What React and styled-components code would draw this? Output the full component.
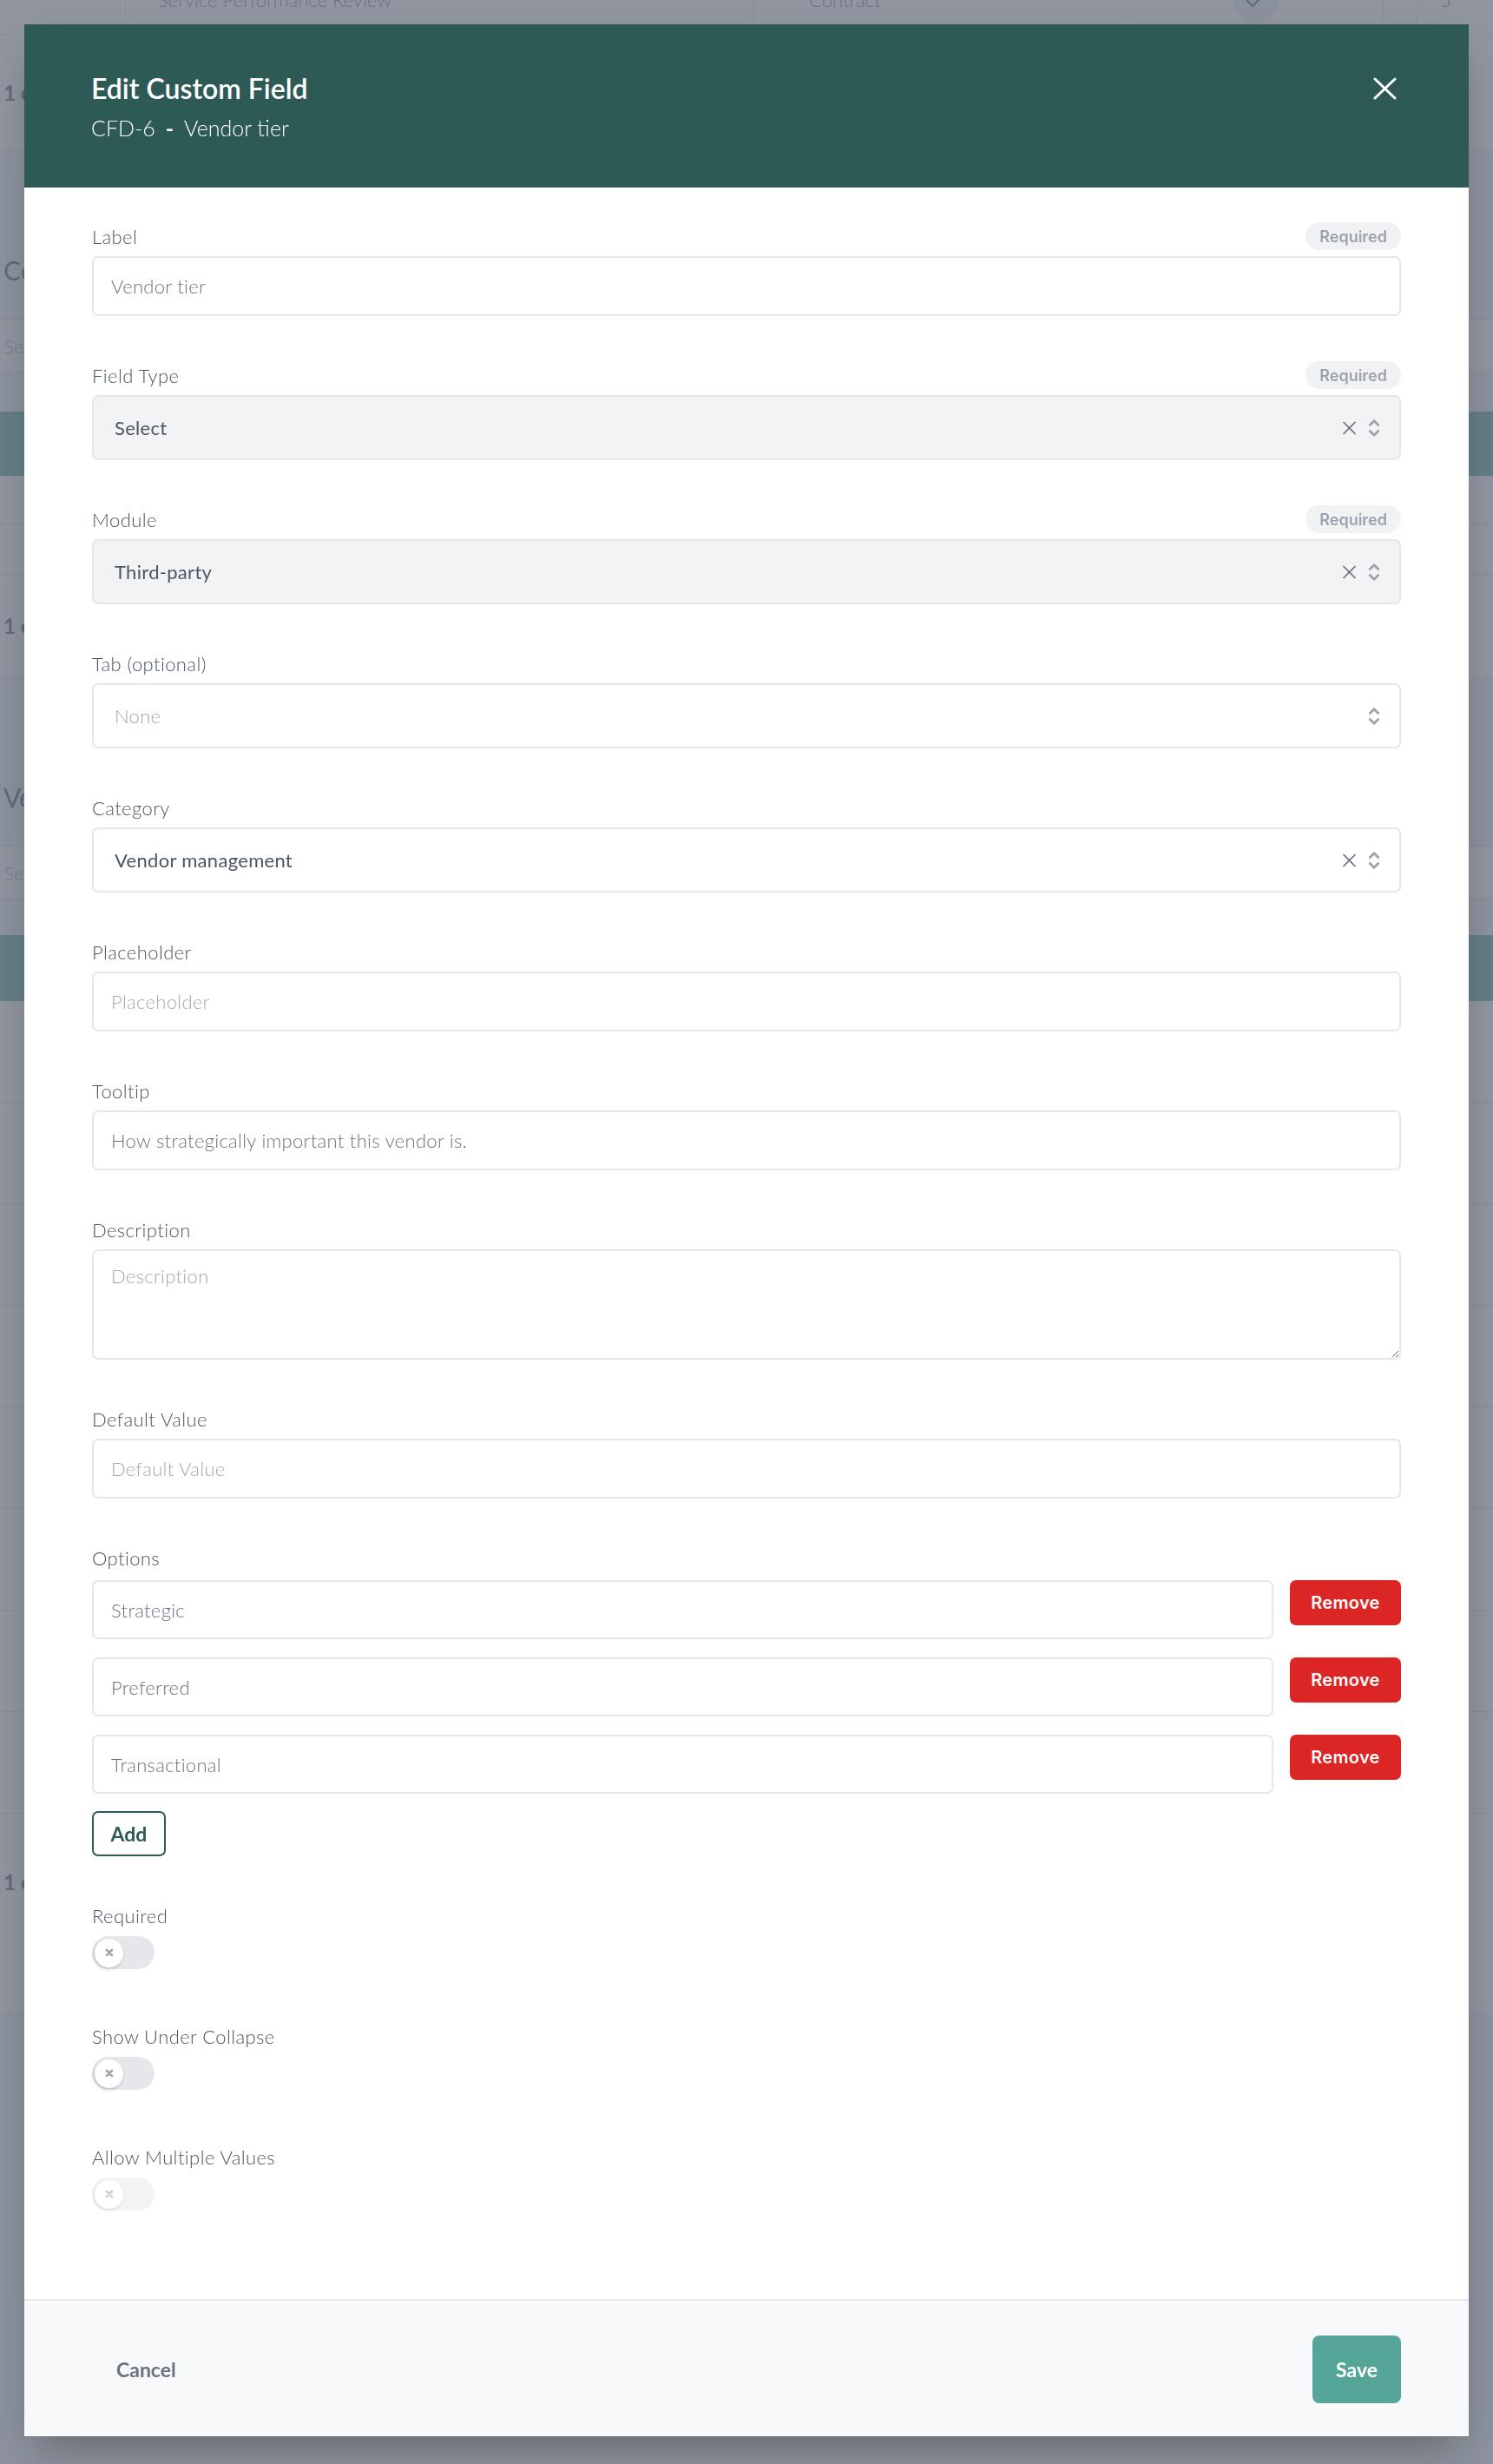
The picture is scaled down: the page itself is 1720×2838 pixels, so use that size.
import React from 'react';
import styled, { createGlobalStyle } from 'styled-components';

const GlobalStyle = createGlobalStyle`
  * { box-sizing: border-box; }
  html, body { margin: 0; padding: 0; }
  body {
    font-family: Lato, "Open Sans", "Liberation Sans", sans-serif;
    background: #f3f4f6;
    -webkit-font-smoothing: antialiased;
  }
  input, textarea, button { font-family: inherit; }
`;

/* ---------- page sitting behind the dialog ---------- */

const Backdrop = styled.div`
  height: 2838px;
  overflow: hidden;
  background: #f3f4f6;
  color: #374151;
`;

const TopRow = styled.div`
  margin-top: -40px;
  height: 80px;
  display: grid;
  grid-template-columns: 144px 723px 432px 294px 39px 1fr;
  background: #fff;
  border-bottom: 1px solid #e5e7eb;
  font-size: 22px;
  font-weight: 300;
  color: #6b7280;
`;

const TopCell = styled.div`
  display: flex;
  align-items: center;
  justify-content: ${p => (p.$center ? 'center' : 'flex-start')};
  padding-left: ${p => p.$pad || 0}px;
  border-left: ${p => (p.$divider ? '1px solid #e5e7eb' : 'none')};
`;

const CheckBubble = styled.span`
  width: 52px;
  height: 52px;
  border-radius: 50%;
  background: #e7efee;
  display: flex;
  align-items: center;
  justify-content: center;
`;

const Pager = styled.div`
  height: ${p => p.$height}px;
  background: ${p => (p.$card ? '#fff' : 'transparent')};
  display: flex;
  align-items: ${p => (p.$top ? 'flex-start' : 'center')};
  padding: ${p => (p.$top ? '64px' : '0')} 0 0 4px;
  font-size: 24px;
  font-weight: 700;
  color: #4b5563;
`;

const SectionTitle = styled.h2`
  margin: 0;
  height: ${p => p.$height}px;
  display: flex;
  align-items: flex-end;
  padding: 0 0 22px 4px;
  font-size: 30px;
  line-height: 34px;
  font-weight: 400;
  color: #4b5563;
`;

const SearchBar = styled.div`
  margin: 17px 0 ${p => p.$after}px;
  height: 62px;
  background: #fff;
  border-top: 1px solid #d1d5db;
  border-bottom: 1px solid #d1d5db;
  display: flex;
  align-items: center;
  padding-left: 4px;
  font-size: 22px;
  font-weight: 300;
  color: #9ca3af;
`;

const HeadBand = styled.div`
  height: ${p => p.$height}px;
  background: #55a698;
`;

const TableRow = styled.div`
  height: ${p => p.$height}px;
  background: #fff;
  border-bottom: 1px solid #d9dce1;
`;

/* ---------- dialog ---------- */

const Overlay = styled.div`
  position: fixed;
  inset: 0;
  background: rgba(107, 114, 128, 0.75);
  display: flex;
  justify-content: center;
  align-items: flex-start;
  padding: 28px 28px 30px;
`;

const Dialog = styled.div`
  width: 100%;
  background: #fff;
  display: flex;
  flex-direction: column;
  box-shadow: 0 25px 50px -12px rgba(0, 0, 0, 0.3);
`;

const Header = styled.header`
  height: 188px;
  background: #2e5a55;
  color: #fff;
  display: flex;
  flex-direction: column;
  justify-content: center;
  padding: 0 83px 0 77px;
`;

const TitleRow = styled.div`
  display: flex;
  align-items: center;
  justify-content: space-between;
  margin-bottom: 11px;
`;

const Title = styled.h1`
  margin: 0;
  font-size: 32px;
  line-height: 38px;
  font-weight: 600;
`;

const Subtitle = styled.p`
  margin: 0;
  font-size: 25px;
  line-height: 30px;
  font-weight: 300;
`;

const Dash = styled.span`
  margin: 0 12px;
  font-weight: 700;
`;

const CloseButton = styled.button`
  border: 0;
  padding: 0;
  background: none;
  display: flex;
  cursor: pointer;
`;

const Body = styled.div`
  padding: 40px 78px 93px;
  display: flex;
  flex-direction: column;
  gap: 52px;
`;

const Field = styled.div`
  display: flex;
  flex-direction: column;
  gap: ${p => p.$gap || 7}px;
`;

const LabelRow = styled.div`
  height: 32px;
  display: flex;
  align-items: center;
  justify-content: space-between;
`;

const Label = styled.label`
  font-size: 22px;
  font-weight: 300;
  letter-spacing: 0.4px;
  color: #4b5563;
`;

const Badge = styled.span`
  height: 32px;
  padding: 0 16px;
  border-radius: 16px;
  background: #f1f2f4;
  color: #9ca3af;
  font-family: Inter, "Open Sans", sans-serif;
  font-size: 18px;
  font-weight: 600;
  display: flex;
  align-items: center;
`;

const TextInput = styled.input`
  width: 100%;
  height: ${p => p.$height || 69}px;
  border: 2px solid #e5e7eb;
  border-radius: 7px;
  padding: 0 20px;
  font-size: 22px;
  font-weight: 300;
  letter-spacing: 0.3px;
  color: #6b7280;
  background: #fff;
  outline: none;
  &::placeholder { color: #a3a8b2; }
`;

const TextArea = styled.textarea`
  width: 100%;
  height: 127px;
  border: 2px solid #e5e7eb;
  border-radius: 7px;
  padding: 16px 20px;
  font-size: 22px;
  line-height: 26px;
  font-weight: 300;
  letter-spacing: 0.3px;
  color: #6b7280;
  outline: none;
  &::placeholder { color: #a3a8b2; }
`;

const SelectBox = styled.div`
  height: 75px;
  border: 2px solid #e5e7eb;
  border-radius: 7px;
  background: ${p => (p.$disabled ? '#f2f3f5' : '#fff')};
  display: flex;
  align-items: center;
  justify-content: space-between;
  padding: 0 22px 0 24px;
  font-size: 22px;
  font-weight: ${p => (p.$muted ? 300 : 400)};
  letter-spacing: 0.3px;
  color: ${p => (p.$muted ? '#9ca3af' : '#4b5563')};
`;

const SelectIcons = styled.span`
  display: flex;
  align-items: center;
  gap: 13px;
`;

const OptionList = styled.div`
  display: flex;
  flex-direction: column;
  gap: 21px;
`;

const OptionRow = styled.div`
  display: flex;
  align-items: flex-start;
  gap: 19px;
`;

const RemoveButton = styled.button`
  flex: none;
  width: 128px;
  height: 52px;
  border: 0;
  border-radius: 7px;
  background: #dc2626;
  color: #fff;
  font-family: Inter, "Open Sans", sans-serif;
  font-size: 20px;
  font-weight: 600;
  letter-spacing: 0.3px;
  cursor: pointer;
`;

const AddButton = styled.button`
  align-self: flex-start;
  margin-top: -1px;
  width: 85px;
  height: 52px;
  border: 2px solid #2e5a55;
  border-radius: 7px;
  background: #fff;
  color: #2e5a55;
  font-size: 23px;
  font-weight: 700;
  cursor: pointer;
`;

const SwitchSlot = styled.div`
  height: 48px;
  padding-top: 1px;
`;

const Switch = styled.span`
  width: 72px;
  height: 38px;
  border-radius: 19px;
  background: #e5e7eb;
  padding: 0 3px;
  display: flex;
  align-items: center;
  opacity: ${p => (p.$disabled ? 0.5 : 1)};
`;

const Knob = styled.span`
  width: 33px;
  height: 33px;
  border-radius: 50%;
  background: #fff;
  box-shadow: -1px 2px 4px rgba(0, 0, 0, 0.18);
  display: flex;
  align-items: center;
  justify-content: center;
`;

const Footer = styled.footer`
  border-top: 2px solid #e5e7eb;
  background: #f8f9fb;
  padding: 40px 78px 38px;
  display: flex;
  align-items: center;
  justify-content: space-between;
`;

const FooterButton = styled.button`
  height: 78px;
  padding: 0 ${p => (p.$primary ? 27 : 28)}px;
  border: 0;
  border-radius: 8px;
  background: ${p => (p.$primary ? '#55a698' : 'transparent')};
  color: ${p => (p.$primary ? '#fff' : '#6b7280')};
  font-size: 23px;
  font-weight: 700;
  cursor: pointer;
`;

/* ---------- icons ---------- */

const CloseIcon = () => (
  <svg width="27" height="26" viewBox="0 0 27 26">
    <path d="M2 2L25 24M25 2L2 24" stroke="#fff" strokeWidth="3" strokeLinecap="round" />
  </svg>
);

const ClearIcon = () => (
  <svg width="17" height="16" viewBox="0 0 17 16">
    <path d="M1.5 1L15.5 15M15.5 1L1.5 15" stroke="#6b7280" strokeWidth="1.7" />
  </svg>
);

const ChevronsIcon = () => (
  <svg width="14" height="24" viewBox="0 0 14 24">
    <path d="M2.2 8.6L7 3.8L11.8 8.6M2.2 15.4L7 20.2L11.8 15.4" fill="none" stroke="#9ca3af" strokeWidth="2.8" strokeLinecap="round" strokeLinejoin="round" />
  </svg>
);

const KnobIcon = () => (
  <svg width="10" height="10" viewBox="0 0 10 10">
    <path d="M2 2L8 8M8 2L2 8" stroke="#9ca3af" strokeWidth="2.6" strokeLinecap="round" />
  </svg>
);

const CheckIcon = () => (
  <svg width="26" height="20" viewBox="0 0 26 20">
    <path d="M2 10L9 17L24 2" fill="none" stroke="#2e5a55" strokeWidth="2" />
  </svg>
);

/* ---------- pieces ---------- */

const Select = ({ value, disabled, muted, clearable = true }) => (
  <SelectBox $disabled={disabled} $muted={muted}>
    <span>{value}</span>
    <SelectIcons>
      {clearable && <ClearIcon />}
      <ChevronsIcon />
    </SelectIcons>
  </SelectBox>
);

const FieldLabel = ({ children, required }) => (
  <LabelRow>
    <Label>{children}</Label>
    {required && <Badge>Required</Badge>}
  </LabelRow>
);

const Toggle = ({ label, disabled }) => (
  <Field>
    <FieldLabel>{label}</FieldLabel>
    <SwitchSlot>
      <Switch $disabled={disabled}>
        <Knob><KnobIcon /></Knob>
      </Switch>
    </SwitchSlot>
  </Field>
);

const options = ['Strategic', 'Preferred', 'Transactional'];

const PageBehind = () => (
  <Backdrop>
    <TopRow>
      <TopCell />
      <TopCell $divider $pad={37}>Service Performance Review</TopCell>
      <TopCell $divider $pad={64}>Contract</TopCell>
      <TopCell $divider $center><CheckBubble><CheckIcon /></CheckBubble></TopCell>
      <TopCell $divider />
      <TopCell $divider $pad={26}>5</TopCell>
    </TopRow>
    <Pager $height={132} $card>1 of 1</Pager>

    <SectionTitle $height={178}>Contract fields</SectionTitle>
    <SearchBar $after={45}>Search</SearchBar>
    <HeadBand $height={74} />
    <TableRow $height={57} />
    <TableRow $height={57} />
    <Pager $height={116} $card>1 of 1</Pager>

    <SectionTitle $height={179}>Vendor fields</SectionTitle>
    <SearchBar $after={41}>Search</SearchBar>
    <HeadBand $height={76} />
    {Array.from({ length: 8 }).map((_, i) => (
      <TableRow key={i} $height={117} />
    ))}
    <Pager $height={227} $card $top>1 of 9</Pager>
  </Backdrop>
);

const App = () => (
  <>
    <GlobalStyle />
    <PageBehind />
    <Overlay>
      <Dialog>
        <Header>
          <TitleRow>
            <Title>Edit Custom Field</Title>
            <CloseButton aria-label="Close"><CloseIcon /></CloseButton>
          </TitleRow>
          <Subtitle>CFD-6<Dash>-</Dash>Vendor tier</Subtitle>
        </Header>

        <Body>
          <Field>
            <FieldLabel required>Label</FieldLabel>
            <TextInput readOnly value="Vendor tier" />
          </Field>

          <Field>
            <FieldLabel required>Field Type</FieldLabel>
            <Select value="Select" disabled />
          </Field>

          <Field>
            <FieldLabel required>Module</FieldLabel>
            <Select value="Third-party" disabled />
          </Field>

          <Field>
            <FieldLabel>Tab (optional)</FieldLabel>
            <Select value="None" muted clearable={false} />
          </Field>

          <Field>
            <FieldLabel>Category</FieldLabel>
            <Select value="Vendor management" />
          </Field>

          <Field>
            <FieldLabel>Placeholder</FieldLabel>
            <TextInput placeholder="Placeholder" />
          </Field>

          <Field>
            <FieldLabel>Tooltip</FieldLabel>
            <TextInput readOnly value="How strategically important this vendor is." />
          </Field>

          <Field>
            <FieldLabel>Description</FieldLabel>
            <TextArea placeholder="Description" />
          </Field>

          <Field>
            <FieldLabel>Default Value</FieldLabel>
            <TextInput placeholder="Default Value" />
          </Field>

          <Field $gap={10}>
            <FieldLabel>Options</FieldLabel>
            <OptionList>
              {options.map(option => (
                <OptionRow key={option}>
                  <TextInput readOnly value={option} $height={68} />
                  <RemoveButton>Remove</RemoveButton>
                </OptionRow>
              ))}
              <AddButton>Add</AddButton>
            </OptionList>
          </Field>

          <Toggle label="Required" />
          <Toggle label="Show Under Collapse" />
          <Toggle label="Allow Multiple Values" disabled />
        </Body>

        <Footer>
          <FooterButton>Cancel</FooterButton>
          <FooterButton $primary>Save</FooterButton>
        </Footer>
      </Dialog>
    </Overlay>
  </>
);

export default App;
